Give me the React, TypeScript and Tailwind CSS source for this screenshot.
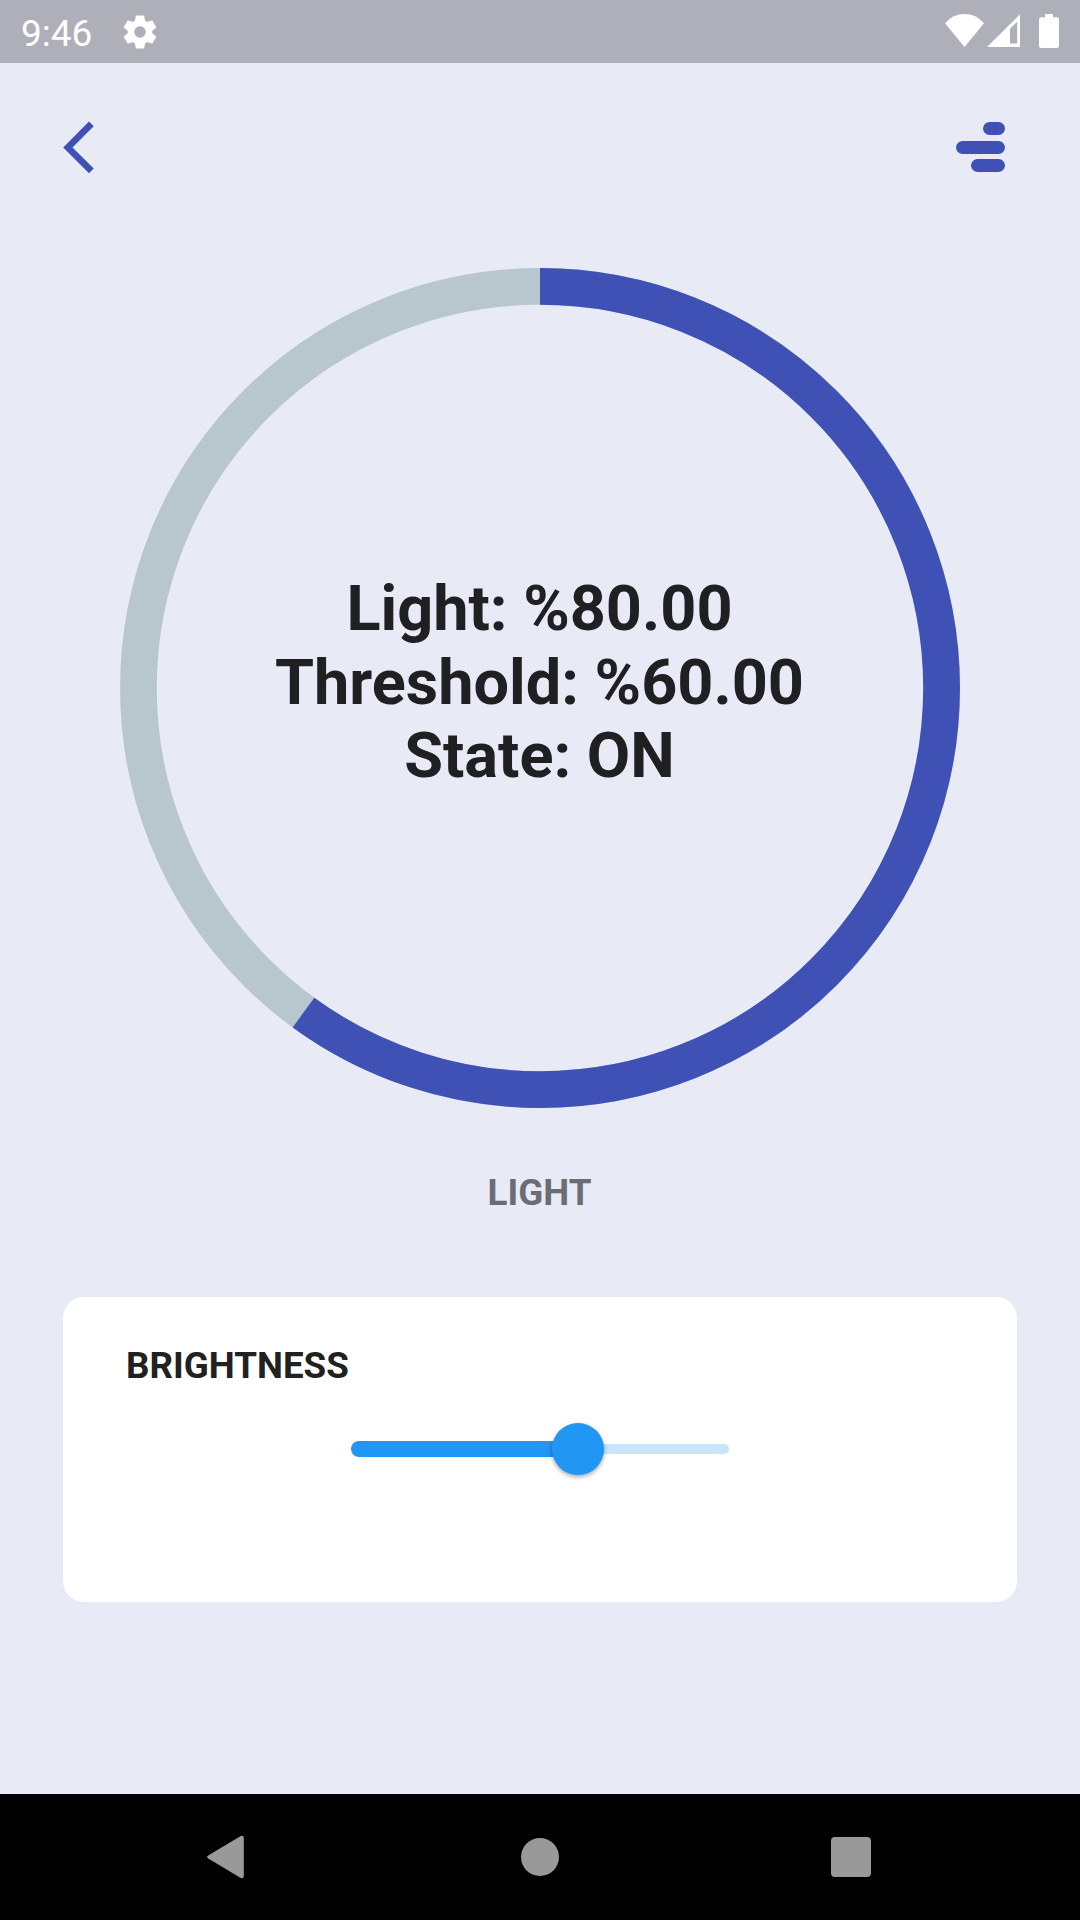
import React from "react";

const RADIUS = 401.6;
const CIRCUMFERENCE = 2 * Math.PI * RADIUS;
const TEETH = [0, 60, 120, 180, 240, 300];

function StatusBar() {
  return (
    <header className="flex h-[63px] shrink-0 items-center justify-between bg-[#afafb9] text-white">
      <div className="flex items-center pl-[21px]">
        <span className="w-[99px] pt-[3px] text-[37px] leading-[43px]">9:46</span>
        <svg className="size-10" viewBox="-20 -20 40 40" fill="none" stroke="currentColor">
          <circle r="9" strokeWidth="6.400" />
          {TEETH.map((angle) => (
            <path
              key={angle}
              d="M-3.500 -15.800H3.500L4.600 -10.500H-4.600Z"
              fill="currentColor"
              strokeWidth="1.400"
              strokeLinejoin="round"
              transform={`rotate(${angle})`}
            />
          ))}
        </svg>
      </div>
      <svg className="h-[63px] w-[140px]" viewBox="940 0 140 63" fill="currentColor">
        <path d="M964.5 47 945 23.2Q953 14 964.5 14T984 23.2Z" />
        <path fillRule="evenodd" d="M987 47 1020 14.3V47ZM1010 28.800V43.4H1017.200V21.8Z" />
        <path d="M1045 14h8v3.2h4a2 2 0 0 1 2 2V46a2 2 0 0 1-2 2h-16a2 2 0 0 1-2-2V19.200a2 2 0 0 1 2-2h4Z" />
      </svg>
    </header>
  );
}

function TopBar() {
  return (
    <div className="flex h-[168px] shrink-0 justify-between pt-[58px] pr-[75px] pl-[63px]">
      <button aria-label="Back" className="h-[53px] w-[32px]">
        <svg className="h-[53px] w-[32px]" viewBox="63 121 32 53" fill="#3f51b5">
          <path d="M89 121.500 93.700 126.200 72.500 147.400 93.700 168.600 89 173.300 63.200 147.400Z" />
        </svg>
      </button>
      <button aria-label="Menu" className="flex h-[52px] w-[50px] flex-col items-end gap-[5.500px] pt-[1px]">
        <span className="h-[13px] w-[22px] shrink-0 rounded-full bg-[#3f51b5]" />
        <span className="h-[13px] w-[49.500px] shrink-0 rounded-full bg-[#3f51b5]" />
        <span className="h-[13px] w-[34px] shrink-0 rounded-full bg-[#3f51b5]" />
      </button>
    </div>
  );
}

function Gauge({ value }: { value: number }) {
  return (
    <div className="mt-[37px] grid size-[840px] shrink-0 place-items-center self-center">
      <svg className="col-start-1 row-start-1 size-[840px]" viewBox="0 0 840 840" fill="none" strokeWidth="36.75">
        <circle cx="420" cy="420" r={RADIUS} stroke="#b8c7cd" />
        <circle
          cx="420"
          cy="420"
          r={RADIUS}
          stroke="#3f51b5"
          strokeDasharray={`${CIRCUMFERENCE * value} ${CIRCUMFERENCE}`}
          transform="rotate(-90 420 420)"
        />
      </svg>
      <div className="col-start-1 row-start-1 pr-px pb-[11.200px] text-center text-[63px] leading-[73.600px] font-bold text-[#202022]">
        <p>Light: %80.00</p>
        <p>Threshold: %60.00</p>
        <p>State: ON</p>
      </div>
    </div>
  );
}

function BrightnessCard() {
  return (
    <section className="mx-[63px] mt-[83px] flex h-[304.500px] shrink-0 flex-col rounded-[21px] bg-white pt-[47px]">
      <h2 className="pl-[63px] text-[36.750px] leading-[43px] font-bold text-[#212121]">BRIGHTNESS</h2>
      <div className="mt-[35.500px] flex h-[53px] w-[378px] items-center self-center">
        <div className="h-[16px] w-[226.800px] rounded-l-full bg-[#2196f3]" />
        <div className="relative -mx-[26.250px] size-[52.500px] shrink-0 rounded-full bg-[#2196f3] shadow-[0_2px_4px_rgba(0,0,0,0.35)]" />
        <div className="h-[10.500px] flex-1 rounded-r-full bg-[#c8e5fc]" />
      </div>
    </section>
  );
}

function NavigationBar() {
  return (
    <nav className="mt-auto flex h-[126px] shrink-0 items-center justify-between bg-black pr-[209px] pl-[206px]">
      <svg className="h-[44px] w-[38px]" viewBox="206 1835 38 44" fill="#999">
        <path d="M208.200 1855.400 240.800 1836Q243.800 1834.700 243.800 1838V1876Q243.800 1879.300 240.800 1878L208.200 1858.600Q206 1857 208.200 1855.400Z" />
      </svg>
      <span className="ml-[5px] size-[38px] rounded-full bg-[#999]" />
      <span className="size-[40px] rounded-[4px] bg-[#999]" />
    </nav>
  );
}

export default function App() {
  return (
    <div className="flex h-[1920px] w-[1080px] flex-col overflow-hidden bg-[#e8eaf6] font-['Roboto',sans-serif]">
      <StatusBar />
      <TopBar />
      <Gauge value={0.6} />
      <p className="mt-[63px] pr-px text-center text-[36.750px] leading-[43px] font-bold text-[#6c6d72]">LIGHT</p>
      <BrightnessCard />
      <NavigationBar />
    </div>
  );
}
